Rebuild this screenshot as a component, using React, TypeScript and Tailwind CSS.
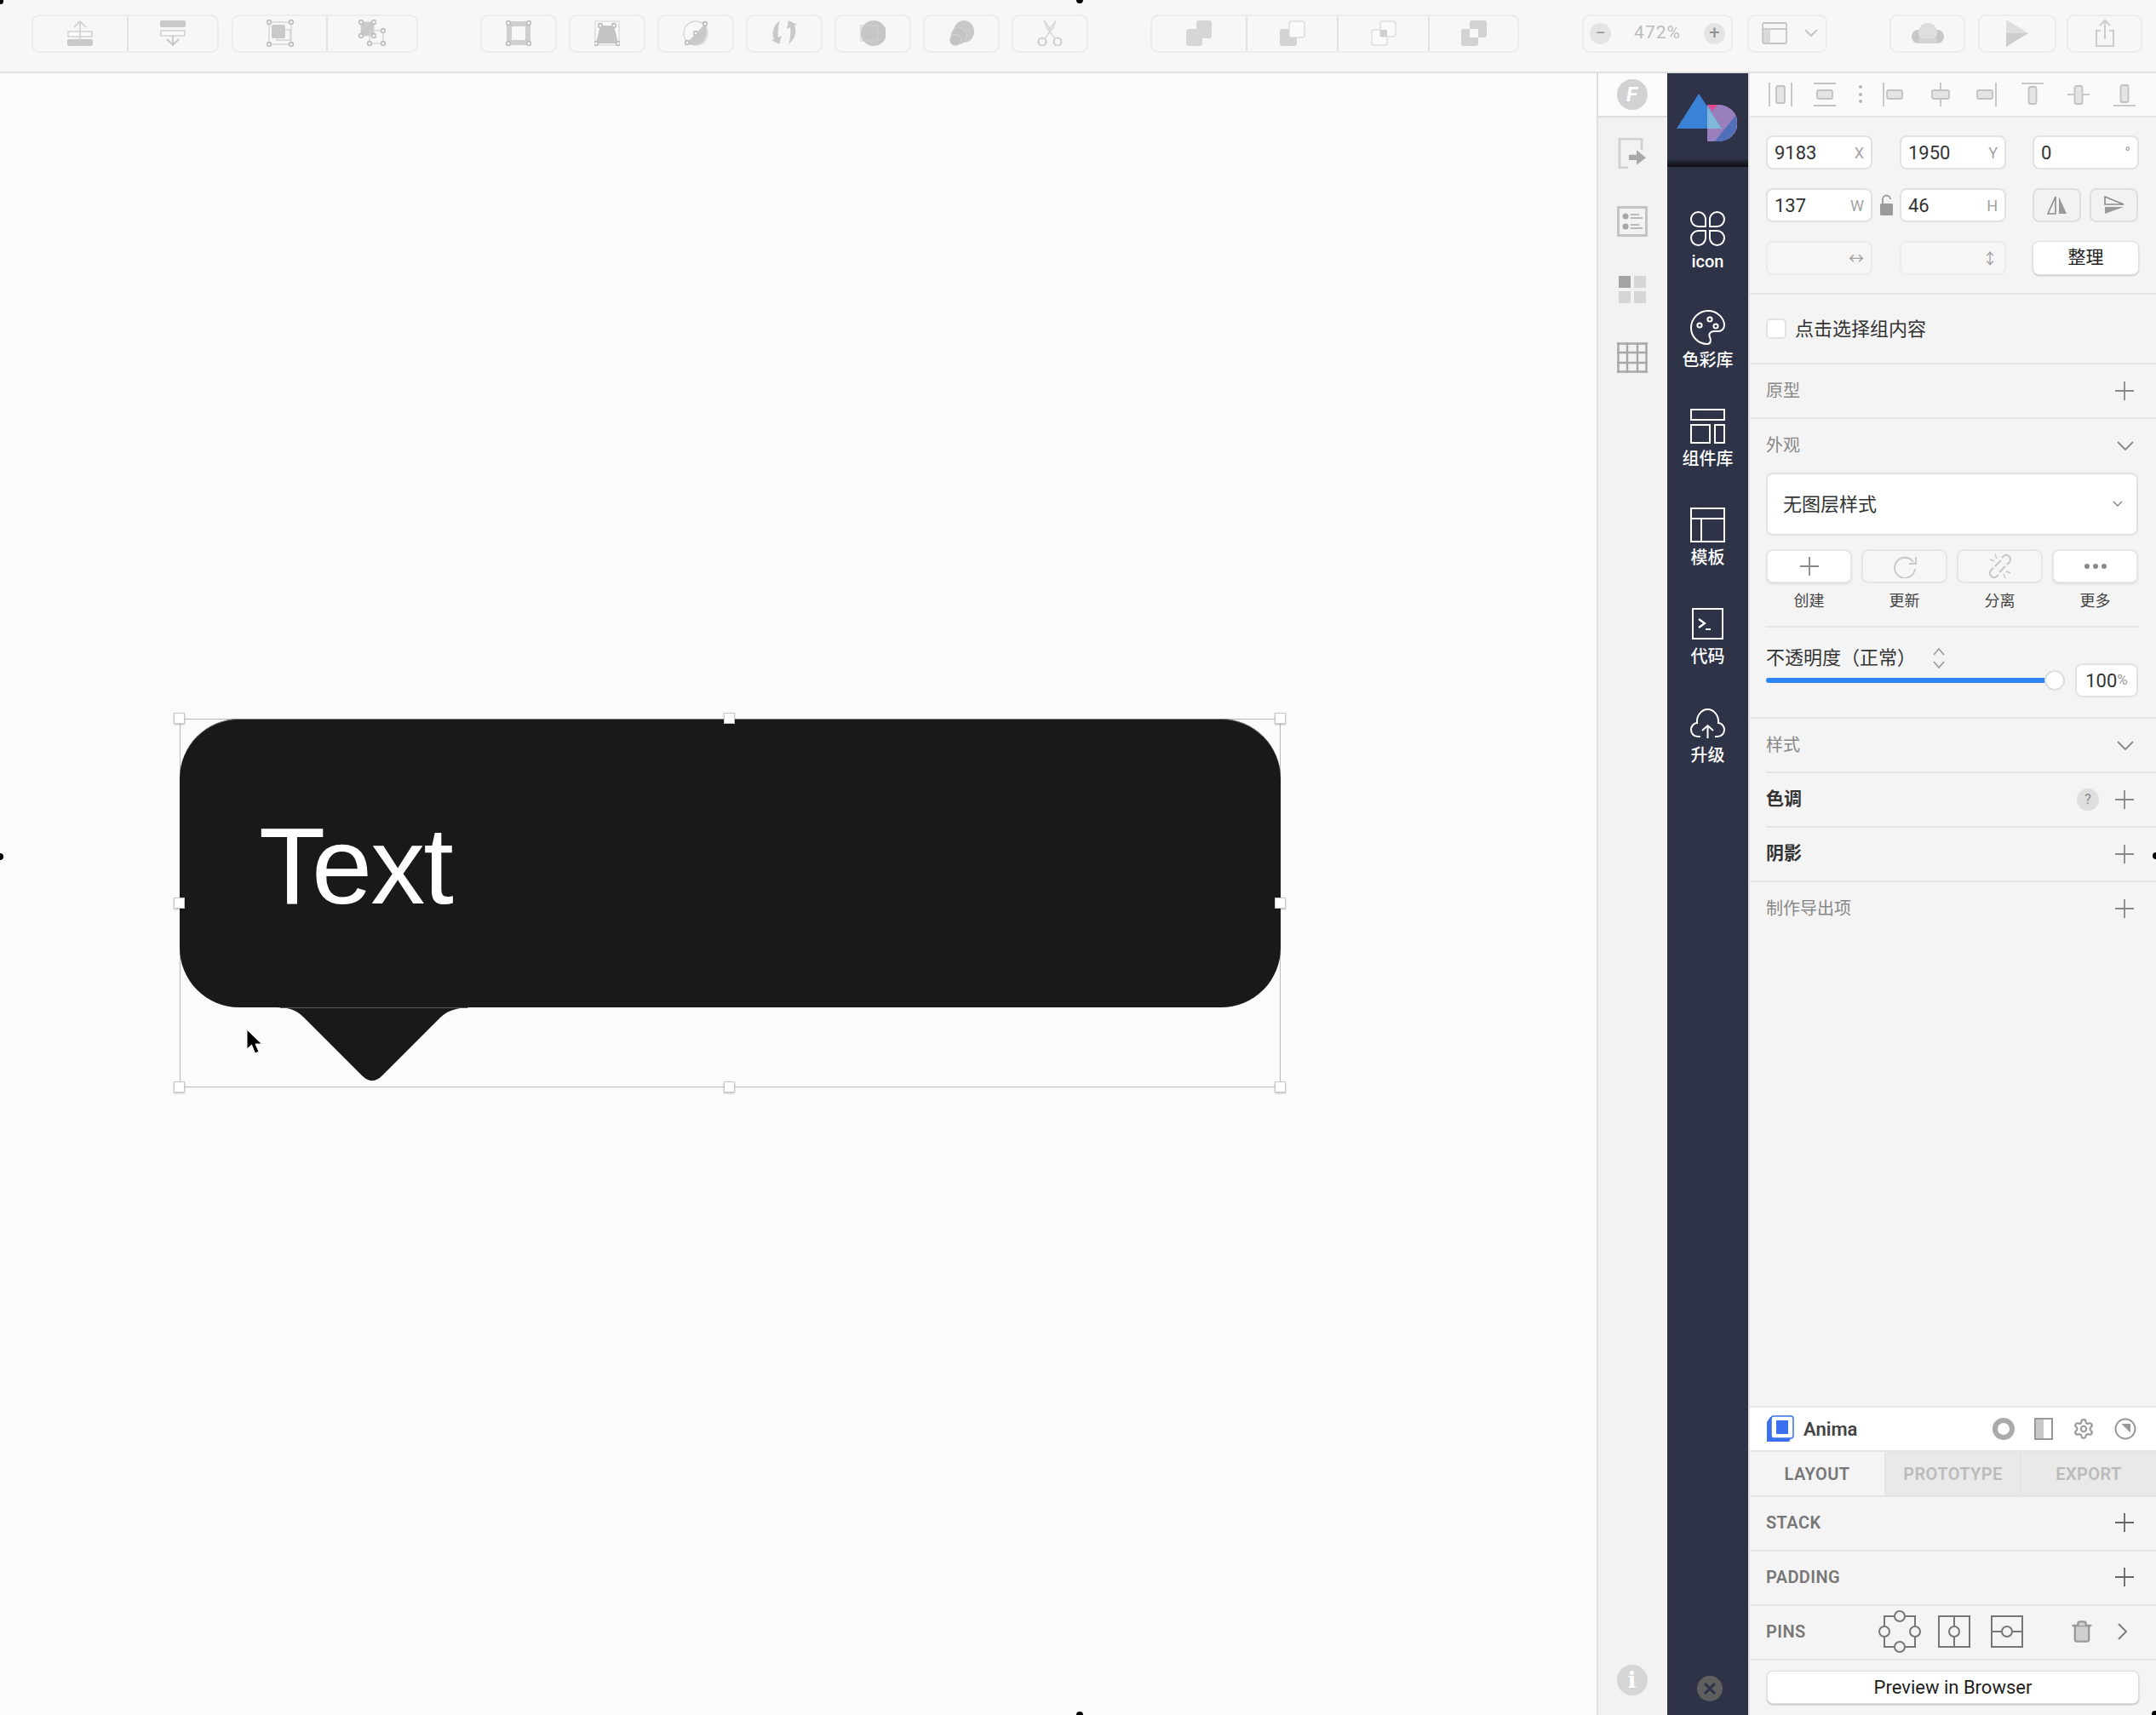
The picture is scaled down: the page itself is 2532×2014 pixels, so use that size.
import type { ReactNode } from 'react';
import { Settings, Trash } from 'lucide-react';

const G = '#c9c9c9';
const L = '#d4d4d4';

function Ico({ children, w = 30, h = 30 }: { children: ReactNode; w?: number; h?: number }) {
  return (
    <svg width={w} height={h} viewBox={`0 0 ${w} ${h}`} fill="none" className="shrink-0">
      {children}
    </svg>
  );
}

function Corner({ x, y }: { x: number; y: number }) {
  return <circle cx={x} cy={y} r="2.4" fill="#f6f6f6" stroke="#bdbdbd" strokeWidth="1.6" />;
}

const toolIcons: Record<string, ReactNode> = {
  forward: (
    <Ico>
      <rect x="1" y="13" width="28" height="6" fill="#fbfbfb" stroke={L} strokeWidth="1.6" />
      <rect x="0" y="22" width="30" height="8" rx="2" fill={G} />
      <path d="M15 1V24M8 8l7-7 7 7" stroke={L} strokeWidth="1.8" />
    </Ico>
  ),
  backward: (
    <Ico>
      <rect x="0" y="0" width="30" height="8" rx="2" fill={G} />
      <rect x="1" y="12" width="28" height="6" fill="#fbfbfb" stroke={L} strokeWidth="1.6" />
      <path d="M15 18V29M8 22l7 7 7-7" stroke="#c4c4c4" strokeWidth="1.8" />
    </Ico>
  ),
  group: (
    <Ico w={32} h={32}>
      <rect x="3" y="3" width="26" height="26" stroke={L} strokeWidth="1.4" />
      <rect x="6" y="6" width="16" height="16" rx="2" fill={G} />
      <path d="M22 12h6v12H12v-2" stroke={L} strokeWidth="1.4" />
      <Corner x={3} y={3} />
      <Corner x={29} y={3} />
      <Corner x={3} y={29} />
      <Corner x={29} y={29} />
    </Ico>
  ),
  ungroup: (
    <Ico w={32} h={32}>
      <rect x="3" y="3" width="15" height="16" fill={G} stroke={L} />
      <rect x="13" y="13" width="16" height="15" stroke={L} strokeWidth="1.4" />
      <Corner x={3} y={3} />
      <Corner x={18} y={3} />
      <Corner x={3} y={19} />
      <Corner x={18} y={19} />
      <Corner x={29} y={13} />
      <Corner x={13} y={28} />
      <Corner x={29} y={28} />
    </Ico>
  ),
  edit: (
    <Ico>
      <rect x="4" y="4" width="22" height="22" stroke="#cfcfcf" strokeWidth="6" />
      <Corner x={3} y={3} />
      <Corner x={27} y={3} />
      <Corner x={3} y={27} />
      <Corner x={27} y={27} />
    </Ico>
  ),
  transform: (
    <Ico>
      <rect x="1" y="1" width="28" height="28" fill="#fafafa" stroke="#dcdcdc" strokeWidth="1.4" />
      <path d="M7 6H23L28 27H2Z" fill="#c4c4c4" />
      <Corner x={7} y={6} />
      <Corner x={23} y={6} />
      <Corner x={2} y={27} />
      <Corner x={28} y={27} />
    </Ico>
  ),
  flatten: (
    <Ico>
      <circle cx="15" cy="15" r="14" fill="#f8f8f8" stroke="#d8d8d8" strokeWidth="1.4" />
      <path d="M26 4C29 12 29 22 21 27C15 30 9 29 5 26Z" fill={G} />
      <Corner x={5} y={26} />
      <Corner x={15} y={15} />
      <Corner x={26} y={4} />
    </Ico>
  ),
  rotate: (
    <Ico>
      <path d="M10 0C2 6 0 15 3 22L0 23L9 28L12 18L8 20C7 13 8 6 10 0Z" fill={G} />
      <path d="M20 28C28 22 30 13 27 6L30 5L20 0L18 10L22 8C23 14 22 22 20 28Z" fill={G} />
    </Ico>
  ),
  mask: (
    <Ico>
      <rect x="1" y="6" width="20" height="18" fill="#f8f8f8" stroke="#d8d8d8" strokeWidth="1.4" />
      <circle cx="16" cy="15" r="15" fill="#c6c6c6" />
      <path d="M6 6H21V24H6" stroke="#d2d2d2" strokeWidth="1" />
    </Ico>
  ),
  scale: (
    <Ico>
      <ellipse cx="18" cy="13" rx="12" ry="13" fill="#c9c9c9" />
      <ellipse cx="12" cy="18" rx="9" ry="10" fill="#c4c4c4" stroke="#d6d6d6" />
      <circle cx="8" cy="23" r="6.5" fill="#c2c2c2" stroke="#d6d6d6" />
    </Ico>
  ),
  scissors: (
    <Ico>
      <circle cx="6" cy="25" r="4.5" stroke="#cfcfcf" strokeWidth="2.2" />
      <circle cx="24" cy="25" r="4.5" stroke="#cfcfcf" strokeWidth="2.2" />
      <path d="M9 21L19 8L22 0L14 11M21 21L11 8L8 0L16 11" stroke="#d9d9d9" strokeWidth="1.6" />
    </Ico>
  ),
  union: (
    <Ico>
      <path d="M12 3a3 3 0 0 1 3-3h12a3 3 0 0 1 3 3v15a3 3 0 0 1-3 3h-8v6a3 3 0 0 1-3 3H3a3 3 0 0 1-3-3V13a3 3 0 0 1 3-3h9Z" fill="#d6d6d6" />
    </Ico>
  ),
  subtract: (
    <Ico>
      <rect x="0" y="10" width="20" height="20" rx="3" fill="#d2d2d2" />
      <rect x="11" y="1" width="18" height="19" rx="3" fill="#fafafa" stroke="#dcdcdc" strokeWidth="1.4" />
    </Ico>
  ),
  intersect: (
    <Ico>
      <rect x="1" y="11" width="18" height="18" rx="3" fill="#fafafa" stroke="#dedede" strokeWidth="1.4" />
      <rect x="11" y="1" width="18" height="18" rx="3" fill="#fafafa" stroke="#dedede" strokeWidth="1.4" />
      <rect x="11" y="11" width="8" height="8" fill="#cfcfcf" />
    </Ico>
  ),
  difference: (
    <Ico>
      <rect x="0" y="10" width="20" height="20" rx="3" fill="#d2d2d2" />
      <rect x="10" y="0" width="20" height="20" rx="3" fill="#d2d2d2" />
      <rect x="10" y="10" width="10" height="10" fill="#f8f8f8" />
    </Ico>
  ),
  cloud: (
    <Ico w={38} h={24}>
      <circle cx="8" cy="16" r="8" fill="#c8c8c8" />
      <circle cx="30" cy="16" r="8" fill="#c8c8c8" />
      <circle cx="19" cy="11" r="11" fill="#dedede" />
      <rect x="8" y="18" width="22" height="6" fill="#d4d4d4" />
    </Ico>
  ),
  play: (
    <Ico w={28} h={32}>
      <path d="M1 0L27 16H1Z" fill="#dedede" />
      <path d="M1 32L27 16H1Z" fill="#cdcdcd" />
    </Ico>
  ),
  share: (
    <Ico w={24} h={34}>
      <path d="M7 14H2V32H22V14H17" stroke="#cdcdcd" strokeWidth="2" />
      <path d="M12 24V2M6 8l6-6 6 6" stroke="#cdcdcd" strokeWidth="2" />
    </Ico>
  ),
};

function ToolGroup({ cells, w, className = '' }: { cells: string[]; w: number[]; className?: string }) {
  return (
    <div className={`flex h-[45px] rounded-[9px] border-2 border-[#ececec] ${className}`}>
      {cells.map((name, i) => (
        <div
          key={name}
          style={{ width: w[i] }}
          className={`flex items-center justify-center ${i > 0 ? 'border-l-2 border-[#e2e2e2]' : ''}`}
        >
          {toolIcons[name]}
        </div>
      ))}
    </div>
  );
}

function Toolbar() {
  return (
    <div className="flex h-[86px] shrink-0 items-center border-b-2 border-[#dfdfdf] bg-[#f7f7f7] pb-[6px] pl-[37px]">
      <ToolGroup cells={['forward', 'backward']} w={[110, 106]} />
      <ToolGroup cells={['group', 'ungroup']} w={[109, 106]} className="ml-[15px]" />
      <div className="ml-[73px] flex gap-[14px]">
        {['edit', 'transform', 'flatten', 'rotate', 'mask', 'scale', 'scissors'].map((n) => (
          <ToolGroup key={n} cells={[n]} w={[86]} />
        ))}
      </div>
      <ToolGroup cells={['union', 'subtract', 'intersect', 'difference']} w={[110, 107, 107, 105]} className="ml-[73px]" />
      <div className="ml-[74px] flex h-[45px] w-[177px] items-center justify-between rounded-[9px] border-2 border-[#ececec] px-[7px]">
        <span className="flex h-[25px] w-[25px] items-center justify-center rounded-full bg-[#e4e4e4] text-[22px] leading-none text-[#8f8f8f]">−</span>
        <span className="text-[21px] tracking-[1px] text-[#bdbdbd]">472%</span>
        <span className="flex h-[25px] w-[25px] items-center justify-center rounded-full bg-[#e4e4e4] text-[22px] leading-none text-[#8f8f8f]">+</span>
      </div>
      <div className="ml-[17px] flex h-[45px] w-[94px] items-center gap-[20px] rounded-[9px] border-2 border-[#ececec] pl-[15px]">
        <Ico w={30} h={26}>
          <rect x="1" y="1" width="28" height="24" rx="2" stroke="#c6c6c6" strokeWidth="1.8" />
          <path d="M1 8H29" stroke="#c6c6c6" strokeWidth="1.8" />
          <rect x="2" y="9" width="8" height="15" fill="#d9d9d9" />
        </Ico>
        <svg width="16" height="10" viewBox="0 0 16 10" fill="none">
          <path d="M1 1l7 7 7-7" stroke="#c6c6c6" strokeWidth="2" />
        </svg>
      </div>
      <ToolGroup cells={['cloud']} w={[85]} className="ml-[73px]" />
      <ToolGroup cells={['play']} w={[88]} className="ml-[15px]" />
      <ToolGroup cells={['share']} w={[85]} className="ml-[12px]" />
    </div>
  );
}

function Handle({ pos }: { pos: string }) {
  return <div className={`absolute h-[13px] w-[13px] border border-[#c8c8c8] bg-white shadow-[0_1px_2px_rgba(0,0,0,0.25)] ${pos}`} />;
}

function Canvas() {
  return (
    <div className="relative flex-1 bg-[#fbfbfb]">
      <div className="absolute left-[211px] top-[758px] h-[433px] w-[1293px] border border-[#b9b9b9]">
        <div className="-m-px flex h-[339px] items-center rounded-[70px] border-t border-[#777] bg-[#191919] pl-[93px] pt-[5px]">
          <span className="text-[128px] leading-none tracking-[-2px] text-white [font-family:'Liberation_Sans',sans-serif]">Text</span>
        </div>
        <svg width="228" height="88" viewBox="0 0 228 88" className="absolute left-[113px] top-[338px]">
          <path d="M0 0C16 0 24 4 32 12L100 80Q112 92 124 80L192 12C201 3 214 0 228 0Z" fill="#191919" />
          <path d="M4 0.500H224" stroke="#5a5a5a" strokeWidth="1" />
        </svg>
        <svg width="20" height="32" viewBox="0 0 20 32" className="absolute left-[77px] top-[363px]">
          <path d="M1 1V24L6.500 19L10.500 29L15 27L11 18H18.500Z" fill="#000" stroke="#fff" strokeWidth="1" />
        </svg>
        <Handle pos="-left-[8px] -top-[8px]" />
        <Handle pos="left-[638px] -top-[8px]" />
        <Handle pos="-right-[7px] -top-[8px]" />
        <Handle pos="-left-[8px] top-[209px]" />
        <Handle pos="-right-[7px] top-[209px]" />
        <Handle pos="-bottom-[7px] -left-[8px]" />
        <Handle pos="-bottom-[7px] left-[638px]" />
        <Handle pos="-bottom-[7px] -right-[7px]" />
      </div>
    </div>
  );
}

function FontStrip() {
  return (
    <div className="flex w-[83px] shrink-0 flex-col items-center border-l-2 border-[#e0e0e0] bg-[#f2f2f2] pr-[2px]">
      <div className="-mr-[2px] flex h-[52px] w-[81px] shrink-0 items-center justify-center border-b-2 border-[#dcdcdc] bg-[#fbfbfb] pr-[2px]">
        <div className="flex h-[36px] w-[36px] items-center justify-center rounded-full bg-[#d2d2d2] text-[24px] font-bold italic leading-none text-white">F</div>
      </div>
      <div className="mt-[24px]">
        <Ico w={34} h={36}>
          <path d="M28 14V1H2V35H12" stroke="#d2d2d2" strokeWidth="3" />
          <path d="M13 23H22V17L33 27L22 36V30H13Z" fill="#a9a9a9" transform="translate(0 -1) scale(1 .9)" />
        </Ico>
      </div>
      <div className="mt-[44px]">
        <Ico w={36} h={36}>
          <rect x="1.500" y="1.500" width="33" height="33" stroke="#c4c4c4" strokeWidth="3" />
          <circle cx="10" cy="12" r="3.500" fill="#a6a6a6" />
          <circle cx="10" cy="24" r="3.500" fill="#a6a6a6" />
          <path d="M16 10H26M16 14H30M16 22H26M16 26H30" stroke="#a6a6a6" strokeWidth="1.600" />
        </Ico>
      </div>
      <div className="mt-[46px] grid grid-cols-[14px_14px] gap-[4px]">
        <div className="h-[14px] bg-[#a3a3a3]" />
        <div className="h-[14px] bg-[#d6d6d6]" />
        <div className="h-[14px] bg-[#d6d6d6]" />
        <div className="h-[14px] bg-[#d6d6d6]" />
      </div>
      <div className="mt-[46px]">
        <Ico w={36} h={36}>
          <path d="M0 1.500H36M0 12H36M0 24H36M0 34.500H36M1.500 0V36M12 0V36M24 0V36M34.500 0V36" stroke="#a8a8a8" strokeWidth="2.400" />
        </Ico>
      </div>
      <div className="mb-[23px] mt-auto flex h-[36px] w-[36px] items-center justify-center rounded-full bg-[#d6d6d6] text-[26px] font-bold leading-none text-white [font-family:'DejaVu_Serif',serif]">i</div>
    </div>
  );
}

const navItems: { label: string; icon: ReactNode }[] = [
  {
    label: 'icon',
    icon: (
      <path d="M18 18H9.500a8.500 8.500 0 1 1 8.500-8.500ZM23 18h8.500a8.500 8.500 0 1 0-8.500-8.500ZM18 23H9.500a8.500 8.500 0 1 0 8.500 8.500ZM23 23h8.500a8.500 8.500 0 1 1-8.500 8.500Z" />
    ),
  },
  {
    label: '色彩库',
    icon: (
      <>
        <path d="M21 1C10 1 1 10 1 21C1 31 9 40 20 40C25 40 24 34 23 32C21 28 24 25 28 25H33C37 25 40 22 40 18C40 9 31 1 21 1Z" />
        <circle cx="11" cy="18" r="2.600" />
        <circle cx="23" cy="11" r="2.600" />
        <circle cx="30" cy="19" r="2.600" />
      </>
    ),
  },
  {
    label: '组件库',
    icon: (
      <>
        <rect x="1" y="1" width="39" height="12" />
        <rect x="1" y="19" width="22" height="21" />
        <rect x="29" y="19" width="11" height="21" />
      </>
    ),
  },
  {
    label: '模板',
    icon: (
      <>
        <rect x="1" y="1" width="39" height="39" />
        <path d="M1 13H40M13 13V40" />
      </>
    ),
  },
  {
    label: '代码',
    icon: (
      <>
        <rect x="3" y="3" width="35" height="35" />
        <path d="M10 15L17 20L10 25M18 27H24" strokeWidth="2.200" />
      </>
    ),
  },
  {
    label: '升级',
    icon: (
      <>
        <path d="M12 37H9C4 37 1 33 1 29C1 25 4 21 8 21C7 13 13 5 20.500 5C28 5 34 13 33 21C37 21 40 25 40 29C40 33 37 37 32 37H29" />
        <path d="M20.500 39V24M14 30L20.500 24L27 30" />
      </>
    ),
  },
];

function NavRail() {
  return (
    <div className="flex w-[95px] shrink-0 flex-col bg-[#2e3347] text-white">
      <div className="flex h-[110px] shrink-0 flex-col">
        <svg width="71" height="56" viewBox="0 0 71 56" className="ml-[11px] mt-[24px]">
          <path d="M36 13H50A21.500 21.500 0 0 1 50 56H36Z" fill="#9a7fbe" />
          <path d="M69 26L45 56H50A21.500 21.500 0 0 0 69 26Z" fill="#4f70b9" />
          <path d="M36 13H48L42 20Z" fill="#e5478e" />
          <path d="M26 0L53 41H0Z" fill="#3a82d6" />
          <path d="M36 15L53 41H36Z" fill="#80b8d8" />
        </svg>
        <div className="mt-auto h-[10px] bg-gradient-to-b from-[#2e3347] to-[#0c0c10]" />
      </div>
      <div className="mt-[52px] flex flex-col">
        {navItems.map((item) => (
          <div key={item.label} className="flex h-[116px] flex-col items-center">
            <svg width="41" height="41" viewBox="0 0 41 41" fill="none" stroke="#fff" strokeWidth="2">
              {item.icon}
            </svg>
            <span className="mt-[4px] text-[20px] font-medium leading-[28px]">{item.label}</span>
          </div>
        ))}
      </div>
      <div className="mb-[16px] ml-[35px] mt-auto flex h-[30px] w-[30px] items-center justify-center rounded-full bg-[#5f5f5f]">
        <svg width="14" height="14" viewBox="0 0 14 14">
          <path d="M1 1L13 13M13 1L1 13" stroke="#2e3347" strokeWidth="3" />
        </svg>
      </div>
    </div>
  );
}

function Plus({ color = '#888' }: { color?: string }) {
  return (
    <svg width="22" height="22" viewBox="0 0 22 22" className="shrink-0">
      <path d="M0 11H22M11 0V22" stroke={color} strokeWidth="1.800" />
    </svg>
  );
}

function Chevron() {
  return (
    <svg width="20" height="11" viewBox="0 0 20 11" fill="none" className="shrink-0">
      <path d="M1 1L10 10L19 1" stroke="#888" strokeWidth="1.800" />
    </svg>
  );
}

function Bar({ children, className = '' }: { children: ReactNode; className?: string }) {
  return <div className={`flex items-center justify-between pr-[26px] ${className}`}>{children}</div>;
}

function Field({ value, suffix, disabled }: { value?: string; suffix?: ReactNode; disabled?: boolean }) {
  return (
    <div
      className={`flex h-[40px] w-[125px] shrink-0 items-center justify-between rounded-[8px] border-2 pl-[8px] pr-[8px] text-[22px] text-[#333] ${
        disabled ? 'border-[#ececec] bg-[#f6f6f6]' : 'border-[#e2e2e2] bg-white'
      }`}
    >
      <span>{value}</span>
      <span className="text-[18px] text-[#a3a3a3]">{suffix}</span>
    </div>
  );
}

const alignIcons: { gap: string; icon: ReactNode }[] = [
  { gap: '', icon: <><path d="M1 0V28M27 0V28" /><rect x="9" y="4" width="10" height="20" rx="2" fill="#e4e4e4" /></> },
  { gap: 'ml-[24px]', icon: <><path d="M1 1H27M1 27H27" /><rect x="5" y="9" width="18" height="10" rx="2" fill="#e4e4e4" /></> },
  { gap: 'ml-[14px]', icon: <><circle cx="14" cy="5" r="2" fill="#b5b5b5" stroke="none" /><circle cx="14" cy="14" r="2" fill="#b5b5b5" stroke="none" /><circle cx="14" cy="22" r="2" fill="#b5b5b5" stroke="none" /></> },
  { gap: 'ml-[10px]', icon: <><path d="M3 0V28" /><rect x="7" y="9" width="18" height="10" rx="2" fill="#e4e4e4" /></> },
  { gap: 'ml-[28px]', icon: <><path d="M14 0V28" /><rect x="4" y="9" width="20" height="10" rx="2" fill="#e4e4e4" /></> },
  { gap: 'ml-[26px]', icon: <><path d="M25 0V28" /><rect x="3" y="9" width="18" height="10" rx="2" fill="#e4e4e4" /></> },
  { gap: 'ml-[26px]', icon: <><path d="M1 1H27" /><rect x="9.500" y="5" width="9" height="20" rx="2" fill="#e4e4e4" /></> },
  { gap: 'ml-[26px]', icon: <><path d="M1 14H27" /><rect x="9.500" y="4" width="9" height="21" rx="2" fill="#e4e4e4" /></> },
  { gap: 'ml-[26px]', icon: <><path d="M1 27H27" /><rect x="9.500" y="3" width="9" height="20" rx="2" fill="#e4e4e4" /></> },
];

function ActionButton({ label, muted, children }: { label: string; muted?: boolean; children: ReactNode }) {
  return (
    <div className="flex w-[101px] flex-col items-center">
      <div
        className={`flex h-[40px] w-full items-center justify-center rounded-[8px] border-2 border-[#e6e6e6] ${
          muted ? 'bg-[#f6f6f6]' : 'bg-white shadow-[0_1px_2px_rgba(0,0,0,0.12)]'
        }`}
      >
        {children}
      </div>
      <span className="mt-[8px] text-[18px] leading-[26px] text-[#444]">{label}</span>
    </div>
  );
}

function Inspector() {
  return (
    <div className="flex w-[479px] shrink-0 flex-col border-l-2 border-[#e4e4e4] bg-[#f4f4f4]">
      <div className="flex h-[52px] shrink-0 items-center border-b-2 border-[#e6e6e6] bg-[#fafafa] pl-[22px]">
        {alignIcons.map((item, i) => (
          <svg key={i} width="28" height="28" viewBox="0 0 28 28" fill="none" stroke="#c2c2c2" strokeWidth="1.800" className={`shrink-0 ${item.gap}`}>
            {item.icon}
          </svg>
        ))}
      </div>

      <div className="flex h-[208px] shrink-0 flex-col gap-[22px] border-b-2 border-[#e4e4e4] pl-[19px] pt-[21px]">
        <div className="flex">
          <Field value="9183" suffix="X" />
          <div className="w-[32px]" />
          <Field value="1950" suffix="Y" />
          <div className="w-[31px]" />
          <Field value="0" suffix="°" />
        </div>
        <div className="flex">
          <Field value="137" suffix="W" />
          <div className="flex w-[32px] items-center justify-center">
            <svg width="15" height="26" viewBox="0 0 15 26" fill="none">
              <path d="M3 11V6a4.500 4.500 0 0 1 9 0" stroke="#9b9b9b" strokeWidth="1.800" />
              <rect x="0" y="11" width="15" height="14" rx="1.500" fill="#9b9b9b" />
            </svg>
          </div>
          <Field value="46" suffix="H" />
          <div className="w-[31px]" />
          <div className="flex gap-[10px]">
            <div className="flex h-[40px] w-[57px] items-center justify-center rounded-[8px] border-2 border-[#dedede] bg-[#f2f2f2]">
              <svg width="24" height="22" viewBox="0 0 24 22" fill="none">
                <path d="M10 1V21H1Z" stroke="#8c8c8c" strokeWidth="1.600" />
                <path d="M14 1V21H23Z" fill="#9a9a9a" />
              </svg>
            </div>
            <div className="flex h-[40px] w-[57px] items-center justify-center rounded-[8px] border-2 border-[#dedede] bg-[#f2f2f2]">
              <svg width="24" height="22" viewBox="0 0 24 22" fill="none">
                <path d="M1 10H23L1 1Z" stroke="#8c8c8c" strokeWidth="1.600" />
                <path d="M1 13H23L1 21Z" fill="#9a9a9a" />
              </svg>
            </div>
          </div>
        </div>
        <div className="flex">
          <Field disabled suffix="↔" />
          <div className="w-[32px]" />
          <Field disabled suffix="↕" />
          <div className="w-[31px]" />
          <div className="flex h-[40px] w-[125px] items-center justify-center rounded-[8px] border border-[#e0e0e0] bg-white text-[21px] text-[#222] shadow-[0_1px_2px_rgba(0,0,0,0.2)]">整理</div>
        </div>
      </div>

      <div className="flex h-[82px] shrink-0 items-center gap-[10px] border-b-2 border-[#e4e4e4] pl-[19px] text-[22px] text-[#333]">
        <div className="h-[24px] w-[24px] rounded-[5px] border-2 border-[#e2e2e2] bg-white" />
        点击选择组内容
      </div>

      <Bar className="h-[64px] shrink-0 border-b-2 border-[#e4e4e4] pl-[19px] text-[20px] text-[#888]">
        原型
        <Plus />
      </Bar>

      <div className="h-[352px] shrink-0 border-b-2 border-[#e4e4e4] pl-[19px]">
        <Bar className="h-[62px] text-[20px] text-[#888]">
          外观
          <Chevron />
        </Bar>
        <div className="mt-[1px] flex h-[74px] w-[437px] items-center justify-between rounded-[8px] border-2 border-[#e2e2e2] bg-white pl-[18px] pr-[16px] text-[22px] text-[#333]">
          无图层样式
          <svg width="12" height="8" viewBox="0 0 12 8" fill="none">
            <path d="M1 1L6 6L11 1" stroke="#888" strokeWidth="1.500" />
          </svg>
        </div>
        <div className="mt-[16px] flex h-[92px] w-[437px] justify-between border-b-2 border-[#e4e4e4]">
          <ActionButton label="创建">
            <Plus />
          </ActionButton>
          <ActionButton label="更新" muted>
            <svg width="28" height="28" viewBox="0 0 28 28" fill="none">
              <path d="M24 9A12 12 0 1 0 26 17" stroke="#c6c6c6" strokeWidth="1.800" />
              <path d="M27 3V11H19" stroke="#c6c6c6" strokeWidth="1.800" />
            </svg>
          </ActionButton>
          <ActionButton label="分离" muted>
            <svg width="26" height="30" viewBox="0 0 26 30" fill="none" stroke="#c6c6c6" strokeWidth="2">
              <path d="M15 5l2-2a5 5 0 0 1 7 7l-3 3M11 25l-2 2a5 5 0 0 1-7-7l3-3M14 8L7 15M12 22l7-7" />
              <path d="M7 1l2 5M1 7l5 2M19 29l-2-5M25 23l-5-2" strokeWidth="1.400" />
            </svg>
          </ActionButton>
          <ActionButton label="更多">
            <svg width="28" height="8" viewBox="0 0 28 8">
              <circle cx="4" cy="4" r="3" fill="#8a8a8a" />
              <circle cx="14" cy="4" r="3" fill="#8a8a8a" />
              <circle cx="24" cy="4" r="3" fill="#8a8a8a" />
            </svg>
          </ActionButton>
        </div>
        <div className="mt-[22px] flex w-[437px] items-center text-[22px] leading-[28px] text-[#333]">
          不透明度（正常）
          <svg width="14" height="26" viewBox="0 0 14 26" fill="none" className="ml-[20px]">
            <path d="M1 9L7 2L13 9M1 17L7 24L13 17" stroke="#999" strokeWidth="1.600" />
          </svg>
        </div>
        <div className="mt-[-8px] flex w-[437px] items-center justify-between">
          <div className="relative h-[6px] w-[351px] rounded-full bg-[#2f84f4]">
            <div className="absolute -top-[9px] right-0 h-[24px] w-[24px] rounded-full border-2 border-[#dedede] bg-white" />
          </div>
          <div className="flex h-[40px] w-[74px] items-center justify-center rounded-[8px] border-2 border-[#e2e2e2] bg-white text-[22px] text-[#333]">
            100<span className="text-[17px] text-[#999]">%</span>
          </div>
        </div>
      </div>

      <div className="shrink-0 pl-[19px]">
        <Bar className="h-[64px] border-b-2 border-[#e4e4e4] text-[20px] text-[#888]">
          样式
          <Chevron />
        </Bar>
        <Bar className="h-[64px] border-b-2 border-[#e4e4e4] text-[21px] font-semibold text-[#333]">
          色调
          <div className="flex items-center gap-[19px]">
            <span className="flex h-[26px] w-[26px] items-center justify-center rounded-full bg-[#dedede] text-[16px] font-normal text-[#888]">?</span>
            <Plus />
          </div>
        </Bar>
        <Bar className="h-[62px] text-[21px] font-semibold text-[#333]">
          阴影
          <Plus />
        </Bar>
      </div>
      <Bar className="h-[64px] shrink-0 border-t-2 border-[#e4e4e4] pl-[19px] text-[20px] text-[#888]">
        制作导出项
        <Plus />
      </Bar>

      <div className="mt-auto flex h-[54px] shrink-0 items-center border-y-2 border-[#e4e4e4] bg-white pl-[20px] pr-[23px]">
        <svg width="32" height="32" viewBox="0 0 32 32">
          <path d="M4 2H30V24L26 31H0V8Z" fill="#3b6ff0" />
          <rect x="5" y="1" width="26" height="26" rx="3" fill="#fff" stroke="#3b6ff0" strokeWidth="1.500" />
          <rect x="11" y="6" width="14" height="16" fill="#3b6ff0" />
        </svg>
        <span className="ml-[11px] text-[22px] font-semibold text-[#444]">Anima</span>
        <div className="ml-auto flex items-center gap-[23px]">
          <div className="h-[26px] w-[26px] rounded-full border-[6px] border-[#aaa]" />
          <div className="flex h-[26px] w-[22px] border-2 border-[#999]">
            <div className="w-1/2 bg-[#c8c8c8]" />
          </div>
          <Settings size={26} color="#999" strokeWidth={2} />
          <svg width="26" height="26" viewBox="0 0 26 26" fill="none">
            <circle cx="13" cy="13" r="11.500" stroke="#999" strokeWidth="2" />
            <path d="M7 7H19V19Z" fill="#999" />
            <path d="M7 7L19 19" stroke="#fff" strokeWidth="2" />
          </svg>
        </div>
      </div>
      <div className="flex h-[53px] shrink-0 border-b-2 border-[#e4e4e4] text-[20px] font-semibold">
        <div className="flex w-[158px] items-center justify-center tracking-[0.4px] text-[#777]">LAYOUT</div>
        <div className="flex w-[161px] items-center justify-center border-x-2 border-[#e4e4e4] bg-[#e9e9e9] tracking-[0.4px] text-[#bbb]">PROTOTYPE</div>
        <div className="flex flex-1 items-center justify-center bg-[#e9e9e9] tracking-[0.4px] text-[#bbb]">EXPORT</div>
      </div>
      <Bar className="h-[64px] shrink-0 border-b-2 border-[#e4e4e4] pb-[2px] pl-[19px] text-[20px] font-semibold tracking-[0.4px] text-[#777]">
        STACK
        <Plus color="#666" />
      </Bar>
      <Bar className="h-[64px] shrink-0 border-b-2 border-[#e4e4e4] pb-[2px] pl-[19px] text-[20px] font-semibold tracking-[0.4px] text-[#777]">
        PADDING
        <Plus color="#666" />
      </Bar>
      <div className="flex h-[64px] shrink-0 items-center border-b-2 border-[#e4e4e4] pb-[2px] pl-[19px] text-[20px] font-semibold tracking-[0.4px] text-[#777]">
        <span className="w-[132px] shrink-0">PINS</span>
        <svg width="50" height="50" viewBox="0 0 50 50" fill="none" stroke="#777" strokeWidth="2" className="shrink-0">
          <rect x="7" y="7" width="36" height="36" />
          <circle cx="25" cy="7" r="6" fill="#f4f4f4" />
          <circle cx="25" cy="43" r="6" fill="#f4f4f4" />
          <circle cx="7" cy="25" r="6" fill="#f4f4f4" />
          <circle cx="43" cy="25" r="6" fill="#f4f4f4" />
        </svg>
        <svg width="38" height="38" viewBox="0 0 38 38" fill="none" stroke="#777" strokeWidth="2" className="ml-[20px] shrink-0">
          <rect x="1" y="1" width="36" height="36" />
          <path d="M19 1V37" />
          <circle cx="19" cy="19" r="6" fill="#f4f4f4" />
        </svg>
        <svg width="38" height="38" viewBox="0 0 38 38" fill="none" stroke="#777" strokeWidth="2" className="ml-[24px] shrink-0">
          <rect x="1" y="1" width="36" height="36" />
          <path d="M1 19H37" />
          <circle cx="19" cy="19" r="6" fill="#f4f4f4" />
        </svg>
        <Trash size={28} color="#999" fill="#cfcfcf" strokeWidth={2} className="ml-[55px] shrink-0" />
        <svg width="12" height="20" viewBox="0 0 12 20" fill="none" className="ml-[28px] shrink-0">
          <path d="M1 1L10 10L1 19" stroke="#777" strokeWidth="1.800" />
        </svg>
      </div>
      <div className="flex h-[64px] shrink-0 items-center pb-[2px] pl-[20px]">
        <div className="flex h-[39px] w-[437px] items-center justify-center rounded-[7px] border border-[#ddd] bg-white text-[22px] text-[#222] shadow-[0_1px_2px_rgba(0,0,0,0.25)]">
          Preview in Browser
        </div>
      </div>
    </div>
  );
}

export default function App() {
  return (
    <div className="relative flex h-[2014px] w-[2532px] flex-col overflow-hidden bg-[#fbfbfb] [font-family:Roboto,'Noto_Sans_CJK_SC',sans-serif]">
      <Toolbar />
      <div className="flex min-h-0 flex-1">
        <Canvas />
        <FontStrip />
        <NavRail />
        <Inspector />
      </div>
      <div className="absolute -left-[3px] -top-[3px] h-[8px] w-[7px] rounded-full bg-black" />
      <div className="absolute -top-[4px] left-[1264px] h-[8px] w-[8px] rounded-full bg-black" />
      <div className="absolute -left-[4px] top-[1002px] h-[8px] w-[8px] rounded-full bg-black" />
      <div className="absolute -right-[4px] top-[1001px] h-[8px] w-[8px] rounded-full bg-black" />
      <div className="absolute -bottom-[4px] left-[1264px] h-[8px] w-[8px] rounded-full bg-black" />
      <div className="absolute -bottom-[3px] -right-[3px] h-[8px] w-[8px] rounded-full bg-black" />
    </div>
  );
}
